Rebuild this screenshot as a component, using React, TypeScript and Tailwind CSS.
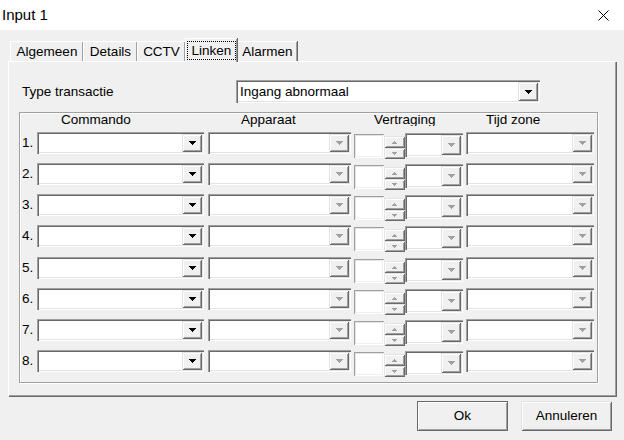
import React from "react";

// classic 3D edges
const sunken =
  "shadow-[inset_1px_1px_0_#a0a0a0,inset_2px_2px_0_#696969,inset_-1px_-1px_0_#ffffff,inset_-2px_-2px_0_#e3e3e3]";
const raised =
  "shadow-[inset_1px_1px_0_#e3e3e3,inset_-1px_-1px_0_#696969,inset_2px_2px_0_#ffffff,inset_-2px_-2px_0_#a0a0a0]";
const editEdge =
  "shadow-[inset_1px_1px_0_#a0a0a0,inset_-1px_-1px_0_#ffffff,inset_2px_2px_0_#e3e3e3,inset_-2px_-2px_0_#f0f0f0]";

const Arrow = ({ disabled }: { disabled?: boolean }) => (
  <svg width="7" height="4" viewBox="0 0 7 4" shapeRendering="crispEdges">
    <path d="M0 0h7v1H0zM1 1h5v1H1zM2 2h3v1H2zM3 3h1v1H3z" fill={disabled ? "#a0a0a0" : "#000"} />
  </svg>
);

const SmallArrow = ({ up }: { up?: boolean }) => (
  <svg width="5" height="3" viewBox="0 0 5 3" shapeRendering="crispEdges">
    <path
      d={up ? "M2 0h1v1H2zM1 1h3v1H1zM0 2h5v1H0z" : "M0 0h5v1H0zM1 1h3v1H1zM2 2h1v1H2z"}
      fill="#a0a0a0"
    />
  </svg>
);

interface ComboProps {
  className: string;
  value?: string;
  disabled?: boolean;
}

const Combo = ({ className, value, disabled }: ComboProps) => (
  <div className={`flex bg-white p-[2px] ${sunken} ${className}`}>
    <div className="flex flex-1 items-center overflow-hidden whitespace-nowrap pl-[2px] pt-[2px]">{value}</div>
    <div className={`flex w-[20px] items-center justify-center bg-[#f0f0f0] ${raised}`}>
      <Arrow disabled={disabled} />
    </div>
  </div>
);

const Spinner = () => (
  <div className="mt-[4px] flex h-[23px] w-[21px] flex-col">
    <div className={`flex h-[12px] items-center justify-center bg-[#f0f0f0] ${raised}`}>
      <SmallArrow up />
    </div>
    <div className={`flex h-[11px] items-center justify-center bg-[#f0f0f0] ${raised}`}>
      <SmallArrow />
    </div>
  </div>
);

const LinkRow = ({ nr, extra }: { nr: number; extra?: string }) => (
  <div className={`flex h-[22px] items-start ${extra ?? ""}`}>
    <div className="flex h-[22px] w-[17px] items-center pl-[2px]">{nr}.</div>
    <Combo className="h-[22px] w-[167px]" />
    <Combo className="ml-[4px] h-[22px] w-[143px]" disabled />
    <div className={`ml-[3px] mt-[2px] h-[24px] w-[30px] bg-white ${editEdge}`} />
    <Spinner />
    <Combo className="mt-[1px] h-[24px] w-[58px]" disabled />
    <Combo className="ml-[3px] h-[22px] w-[128px]" disabled />
  </div>
);

const tabs = [
  { label: "Algemeen", w: "w-[73px]" },
  { label: "Details", w: "w-[54px]" },
  { label: "CCTV", w: "w-[48px]" },
  { label: "Linken", w: "w-[52px]", active: true },
  { label: "Alarmen", w: "w-[60px]" },
];

export default function App() {
  return (
    <div className="flex h-[440px] w-[624px] flex-col bg-[#f0f0f0] font-['Liberation_Sans',Arial,sans-serif] text-[13.5px] text-black">
      {/* title bar */}
      <div className="flex h-[30px] items-center justify-between bg-white pl-[2px] pr-[15px]">
        <span className="text-[15px]">Input 1</span>
        <svg width="11" height="11" viewBox="0 0 11 11">
          <path d="M0.5 0.5L10.5 10.5M10.5 0.5L0.5 10.5" stroke="#000" strokeWidth="1" />
        </svg>
      </div>

      {/* tabs */}
      <div className="ml-[10px] mt-[8px] flex h-[23px] items-end">
        {tabs.map((t) =>
          t.active ? (
            <div
              key={t.label}
              className={`relative z-10 -mb-px flex h-[24px] ${t.w} items-start border-l border-t border-white bg-[#f0f0f0] px-[1px] pt-[2px] shadow-[inset_-1px_0_0_#a0a0a0,1px_0_0_#696969]`}
            >
              <div className="flex h-[19px] w-full items-center justify-center border border-dotted border-black leading-none">
                {t.label}
              </div>
            </div>
          ) : (
            <div
              key={t.label}
              className={`flex h-[20px] ${t.w} items-center justify-center border-l border-t border-white bg-[#f0f0f0] pt-[1px] shadow-[inset_-1px_0_0_#a0a0a0,1px_0_0_#696969]`}
            >
              {t.label}
            </div>
          )
        )}
      </div>

      {/* tab page */}
      <div className="ml-[8px] flex h-[335px] w-[608px] flex-col border-l border-t border-white shadow-[inset_-1px_-1px_0_#a0a0a0,1px_1px_0_#696969]">
        <div className="mt-[18px] flex h-[23px] items-center">
          <span className="w-[227px] pl-[13px] pt-[2px]">Type transactie</span>
          <Combo className="h-[23px] w-[304px]" value="Ingang abnormaal" />
        </div>

        <div className="ml-[10px] mt-[9px] h-[271px] w-[579px] border border-[#a0a0a0] shadow-[inset_1px_1px_0_#ffffff,1px_1px_0_#ffffff]">
          <div className="flex h-[16px] items-start">
            <span className="w-[221px] pl-[41px] leading-[13px]">Commando</span>
            <span className="w-[133px] leading-[13px]">Apparaat</span>
            <span className="h-[13px] w-[112px] overflow-hidden leading-[13px]">Vertraging</span>
            <span className="leading-[13px]">Tijd zone</span>
          </div>
          <div className="mt-[3px] flex flex-col gap-[9px]">
            <LinkRow nr={1} />
            <LinkRow nr={2} />
            <LinkRow nr={3} />
            <LinkRow nr={4} />
            <LinkRow nr={5} extra="mt-px" />
            <LinkRow nr={6} />
            <LinkRow nr={7} />
            <LinkRow nr={8} />
          </div>
        </div>
      </div>

      {/* buttons */}
      <div className="mt-[5px] flex justify-end gap-[13px] pr-[12px]">
        <button className="flex h-[30px] w-[91px] items-center justify-center border border-[#696969] bg-[#f0f0f0] shadow-[inset_1px_1px_0_#ffffff,inset_-1px_-1px_0_#a0a0a0]">
          Ok
        </button>
        <button className={`flex h-[30px] w-[91px] items-center justify-center bg-[#f0f0f0] ${raised}`}>
          Annuleren
        </button>
      </div>
    </div>
  );
}
